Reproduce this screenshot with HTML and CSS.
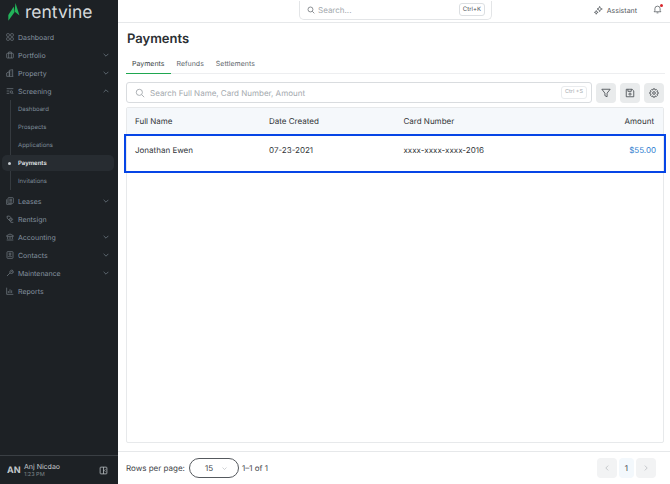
FILE: index.html
```html
<!DOCTYPE html>
<html lang="en">
<head>
    <meta charset="UTF-8">
    <title>Rentvine - Payments</title>
    <link rel="stylesheet" href="styles.css">
</head>
<body>
    <aside class="sidebar">
        <div class="logo">
            <svg width="14" height="22" viewBox="0 0 14 22"><path d="M8.500 1 L12.500 13.500 L7.500 9.500 Z" fill="#22b45a"/><path d="M6.800 4.500 L7.300 10.500 L1.300 18.800 L1.300 13 Z" fill="#22b45a"/></svg>
            <span>rentvine</span>
        </div>
        <nav class="menu">
            <a class="item"><svg class="ico" viewBox="0 0 12 12"><rect x="1" y="1" width="4" height="4" rx="1"/><rect x="7" y="1" width="4" height="4" rx="1"/><rect x="1" y="7" width="4" height="4" rx="1"/><rect x="7" y="7" width="4" height="4" rx="1"/></svg>Dashboard</a>
            <a class="item"><svg class="ico" viewBox="0 0 12 12"><rect x="1" y="3.500" width="10" height="7" rx="1"/><path d="M4 3.500V1.500H8V3.500M4 3.500V10.500M8 3.500V10.500"/></svg>Portfolio<svg class="chev" viewBox="0 0 10 6"><path d="M1 1L5 5L9 1"/></svg></a>
            <a class="item"><svg class="ico" viewBox="0 0 12 12"><path d="M1 11V6L5 4V11M5 11V2L10 1V11M1 11H11M7 4H8M7 6H8M7 8H8"/></svg>Property<svg class="chev" viewBox="0 0 10 6"><path d="M1 1L5 5L9 1"/></svg></a>
            <a class="item"><svg class="ico" viewBox="0 0 12 12"><path d="M1 2.500H11M1 6H5M1 9.500H5"/><circle cx="8" cy="7.500" r="1.800"/><path d="M9.500 9L11 10.500"/></svg>Screening<svg class="chev" viewBox="0 0 10 6"><path d="M1 5L5 1L9 5"/></svg></a>
            <div class="submenu">
                <a class="subitem">Dashboard</a>
                <a class="subitem">Prospects</a>
                <a class="subitem">Applications</a>
                <a class="subitem active"><i class="dot"></i>Payments</a>
                <a class="subitem">Invitations</a>
            </div>
            <a class="item"><svg class="ico" viewBox="0 0 12 12"><rect x="3" y="1" width="8" height="8.500" rx="1"/><path d="M1 3.500V11H8.500M5 3.500H9M5 5.500H9M5 7.500H9"/></svg>Leases<svg class="chev" viewBox="0 0 10 6"><path d="M1 1L5 5L9 1"/></svg></a>
            <a class="item"><svg class="ico" viewBox="0 0 12 12"><path d="M1.500 2L5 1.500L10 6.500L7 10L2 5Z"/><circle cx="6.500" cy="6.500" r="1.500"/><path d="M7 11H11"/></svg>Rentsign</a>
            <a class="item"><svg class="ico" viewBox="0 0 12 12"><path d="M1 4L6 1.500L11 4V5H1ZM2.500 5.500V9M6 5.500V9M9.500 5.500V9M1 10.500H11"/></svg>Accounting<svg class="chev" viewBox="0 0 10 6"><path d="M1 1L5 5L9 1"/></svg></a>
            <a class="item"><svg class="ico" viewBox="0 0 12 12"><rect x="1.500" y="1" width="9" height="10" rx="1"/><circle cx="6" cy="4.500" r="1.500"/><path d="M3.500 9C3.500 7 8.500 7 8.500 9"/></svg>Contacts<svg class="chev" viewBox="0 0 10 6"><path d="M1 1L5 5L9 1"/></svg></a>
            <a class="item"><svg class="ico" viewBox="0 0 12 12"><path d="M1.500 10.500L6 6M6 6C5 3 7.500 1 10 2L8 4L9 5L11 3.500C11.500 6 9 8 6 6Z"/></svg>Maintenance<svg class="chev" viewBox="0 0 10 6"><path d="M1 1L5 5L9 1"/></svg></a>
            <a class="item"><svg class="ico" viewBox="0 0 12 12"><path d="M1 1V11H11M3.500 9V6M6 9V3.500M8.500 9V5"/></svg>Reports</a>
        </nav>
        <div class="user">
            <span class="initials">AN</span>
            <div class="user-info">
                <span class="user-name">Anj Nicdao</span>
                <span class="user-time">1:23 PM</span>
            </div>
            <svg class="collapse" viewBox="0 0 12 12"><rect x="1.500" y="1.500" width="9" height="9" rx="1"/><path d="M6 1.500V10.500M8.500 4.500L7 6L8.500 7.500"/></svg>
        </div>
    </aside>

    <div class="main">
        <header class="topbar">
            <div class="global-search">
                <svg class="search-ico" viewBox="0 0 12 12"><circle cx="5.200" cy="5.200" r="3.700"/><path d="M8 8L11 11"/></svg>
                <span class="global-text">Search...</span>
                <span class="kbd">Ctrl+K</span>
            </div>
            <div class="assistant">
                <svg class="top-ico" viewBox="0 0 12 12"><path d="M7.500 .5L8.500 3L11 4L8.500 5L7.500 7.500L6.500 5L4 4L6.500 3ZM3 6L3.700 7.800L5.500 8.500L3.700 9.200L3 11L2.300 9.200L.5 8.500L2.300 7.800Z"/></svg>
                Assistant
            </div>
            <div class="bell">
                <svg class="top-ico" viewBox="0 0 12 12"><path d="M1.500 9H10.500L9.500 7.500V5A3.500 3.500 0 0 0 2.500 5V7.500ZM4.800 10.500H7.200"/></svg>
                <i class="bell-dot"></i>
            </div>
        </header>

        <div class="content">
            <h1>Payments</h1>
            <div class="tabs">
                <a class="tab active">Payments</a>
                <a class="tab">Refunds</a>
                <a class="tab">Settlements</a>
            </div>
            <div class="toolbar">
                <div class="search-box">
                    <svg class="box-ico" viewBox="0 0 12 12"><circle cx="5.200" cy="5.200" r="3.700"/><path d="M8 8L11 11"/></svg>
                    <span class="box-text">Search Full Name, Card Number, Amount</span>
                    <span class="kbd light">Ctrl +S</span>
                </div>
                <button class="tool"><svg viewBox="0 0 12 12"><path d="M1 1.500H11L7.300 6.200V10.500L4.700 9.200V6.200Z"/></svg></button>
                <button class="tool"><svg viewBox="0 0 12 12"><path d="M1.500 1.500H8.500L10.500 3.500V10.500H1.500ZM3.500 1.500V4H7.500V1.500"/><circle cx="6" cy="7.300" r="1.300"/></svg></button>
                <button class="tool"><svg viewBox="0 0 12 12"><circle cx="6" cy="6" r="1.600"/><path d="M5 1H7L7.400 2.500L8.800 1.800L10.200 3.200L9.500 4.600L11 5V7L9.500 7.400L10.200 8.800L8.800 10.200L7.400 9.500L7 11H5L4.600 9.500L3.200 10.200L1.800 8.800L2.500 7.400L1 7V5L2.500 4.600L1.800 3.200L3.200 1.800L4.600 2.500Z"/></svg></button>
            </div>
            <div class="table">
                <div class="row head">
                    <span>Full Name</span>
                    <span>Date Created</span>
                    <span>Card Number</span>
                    <span class="right">Amount</span>
                </div>
                <div class="row selected">
                    <span>Jonathan Ewen</span>
                    <span>07-23-2021</span>
                    <span>xxxx-xxxx-xxxx-2016</span>
                    <span class="right amount">$55.00</span>
                </div>
            </div>
        </div>

        <footer class="pager">
            <span>Rows per page:</span>
            <div class="rows-select">15<svg viewBox="0 0 10 6"><path d="M1 1L5 5L9 1"/></svg></div>
            <span>1–1 of 1</span>
            <div class="pages">
                <button class="page-btn"><svg viewBox="0 0 6 10"><path d="M5 1L1 5L5 9"/></svg></button>
                <span class="page-num">1</span>
                <button class="page-btn"><svg viewBox="0 0 6 10"><path d="M1 1L5 5L1 9"/></svg></button>
            </div>
        </footer>
    </div>
</body>
</html>
```

FILE: styles.css
```css
* {
    box-sizing: border-box;
}
body {
    margin: 0;
    height: 484px;
    display: flex;
    overflow: hidden;
    font-family: Inter, "Liberation Sans", sans-serif;
    font-size: 8px;
    color: #3a3f44;
    background: #fff;
    text-rendering: geometricPrecision;
}
svg {
    fill: none;
    stroke: currentColor;
    stroke-width: 1;
}

/* Sidebar */
.sidebar {
    width: 118px;
    flex-shrink: 0;
    display: flex;
    flex-direction: column;
    background: #1d2125;
}
.logo {
    height: 28px;
    display: flex;
    align-items: center;
    gap: 4px;
    padding: 0 0 4px 7px;
    color: #d5d9dc;
    font-size: 17.500px;
}
.logo svg {
    stroke: none;
    margin-top: 2px;
}
.menu {
    flex: 1;
}
.item {
    height: 18px;
    display: flex;
    align-items: center;
    padding: 0 9px 0 6px;
    color: #8593a0;
    font-size: 7px;
}
.ico {
    width: 8px;
    height: 8px;
    margin-right: 4px;
    color: #7a838b;
    flex-shrink: 0;
}
.chev {
    width: 6px;
    height: 4px;
    margin-left: auto;
    color: #8593a0;
}
.submenu {
    margin: 0 0 2px 10px;
    position: relative;
}
.submenu::before {
    content: "";
    position: absolute;
    left: 0;
    top: 0;
    bottom: 0;
    width: 1px;
    background: #353a3f;
}
.subitem {
    height: 18px;
    display: flex;
    align-items: center;
    padding-left: 8px;
    color: #7e8c99;
    font-size: 6px;
    position: relative;
}
.subitem.active {
    height: 16px;
    margin: 1px 4px 1px -8px;
    padding-left: 16px;
    border-radius: 5px;
    background: #272c31;
    color: #e4e7ea;
    font-weight: 600;
}
.dot {
    position: absolute;
    left: 6px;
    width: 3px;
    height: 3px;
    border-radius: 50%;
    background: #c5cbd0;
}
.user {
    height: 29px;
    display: flex;
    align-items: center;
    padding: 0 10px 0 7px;
    border-top: 1px solid #3a3f44;
    color: #c3c8cc;
}
.initials {
    width: 17px;
    font-size: 9px;
    font-weight: 700;
}
.user-info {
    display: flex;
    flex-direction: column;
    flex: 1;
}
.user-name {
    font-size: 7px;
}
.user-time {
    font-size: 5.500px;
    color: #7e8689;
    margin-top: 1px;
}
.collapse {
    width: 9px;
    height: 9px;
}

/* Main area */
.main {
    flex: 1;
    min-width: 0;
    display: flex;
    flex-direction: column;
}
.topbar {
    height: 23px;
    flex-shrink: 0;
    display: flex;
    align-items: center;
    padding-right: 8px;
    border-bottom: 1px solid #e6e8ea;
}
.global-search {
    width: 193px;
    height: 19px;
    margin: -2px 0 0 181px;
    display: flex;
    align-items: center;
    padding: 0 6px 0 7px;
    border: 1px solid #e3e5e7;
    border-top: none;
    border-radius: 0 0 5px 5px;
}
.search-ico {
    width: 8px;
    height: 8px;
    color: #555b60;
}
.global-text {
    margin-left: 3px;
    flex: 1;
    font-size: 8px;
    color: #a3a8ad;
}
.kbd {
    padding: 2px 3px;
    font-size: 6px;
    line-height: 7px;
    color: #50565b;
    border: 1px solid #dcdfe2;
    border-radius: 3px;
}
.kbd.light {
    color: #a9adb1;
    border-color: #e9ebed;
    font-size: 5.500px;
}
.assistant {
    display: flex;
    align-items: center;
    gap: 4px;
    margin: -2px 0 0 auto;
    font-size: 7px;
    color: #50565b;
}
.top-ico {
    width: 9px;
    height: 9px;
    color: #50565b;
}
.bell {
    margin: -3px 0 0 16px;
    position: relative;
    display: flex;
}
.bell-dot {
    position: absolute;
    top: -1px;
    right: -1px;
    width: 3px;
    height: 3px;
    border-radius: 50%;
    background: #d8262c;
}
.content {
    flex: 1;
    min-height: 0;
    padding: 0 5px 8px 8px;
    display: flex;
    flex-direction: column;
}
h1 {
    margin: 7px 0 0 1px;
    font-size: 13px;
    line-height: 18px;
    font-weight: 600;
    color: #2b2f33;
}
.tabs {
    display: flex;
    height: 24px;
    margin-top: 2px;
    border-bottom: 1px solid #edeef0;
}
.tab {
    padding: 0 6px;
    line-height: 27px;
    font-size: 7px;
    color: #62686d;
}
.tab.active {
    color: #3a3f44;
    height: 24px;
    border-bottom: 1px solid #1fa750;
}
.toolbar {
    display: flex;
    align-items: center;
    gap: 4px;
    margin-top: 8px;
}
.search-box {
    width: 466px;
    height: 21px;
    display: flex;
    align-items: center;
    padding: 0 4px 0 8px;
    border: 1px solid #d9dcdf;
    border-radius: 3px;
}
.box-ico {
    width: 10px;
    height: 10px;
    color: #9ca1a6;
}
.box-text {
    flex: 1;
    margin-left: 5px;
    font-size: 8px;
    color: #a3a8ad;
}
.tool {
    width: 20px;
    height: 20px;
    padding: 0;
    border: none;
    border-radius: 4px;
    background: #e9ebec;
    color: #43484d;
    display: flex;
    align-items: center;
    justify-content: center;
}
.tool svg {
    width: 10px;
    height: 10px;
}
.table {
    flex: 1;
    margin: 4px 1px 0 0;
    border: 1px solid #e7e9eb;
    border-radius: 2px;
}
.row {
    display: grid;
    grid-template-columns: 134px 134.500px 1fr 60px;
    align-items: center;
    padding: 0 9px 0 8px;
    font-size: 8px;
    color: #2f3337;
}
.head {
    height: 26px;
    background: #f5f8fb;
}
.selected {
    height: 39px;
    margin: 0 -3px;
    padding: 0 8px 8px 9px;
    border: 2px solid #0645e6;
}
.right {
    text-align: right;
}
.amount {
    color: #2f80cf;
}

/* Pagination */
.pager {
    height: 33px;
    flex-shrink: 0;
    display: flex;
    align-items: center;
    padding: 0 14px 0 8px;
    border-top: 1px solid #e6e8ea;
    font-size: 8px;
    color: #3f4449;
}
.rows-select {
    width: 50px;
    height: 20px;
    margin: 0 3px 0 4px;
    display: flex;
    align-items: center;
    padding-left: 15px;
    border: 1px solid #55595e;
    border-radius: 10px;
}
.rows-select svg {
    width: 5px;
    height: 3px;
    margin-left: 9px;
    color: #a0a5aa;
}
.pages {
    margin-left: auto;
    display: flex;
    align-items: center;
    gap: 2px;
}
.page-btn {
    width: 20px;
    height: 20px;
    padding: 0;
    border: none;
    border-radius: 4px;
    background: #f2f3f4;
    color: #a9adb1;
    display: flex;
    align-items: center;
    justify-content: center;
}
.page-btn svg {
    width: 4px;
    height: 6px;
}
.page-num {
    width: 15px;
    height: 20px;
    text-align: center;
    line-height: 20px;
    background: #f3f8fc;
    border-radius: 4px;
}
```
